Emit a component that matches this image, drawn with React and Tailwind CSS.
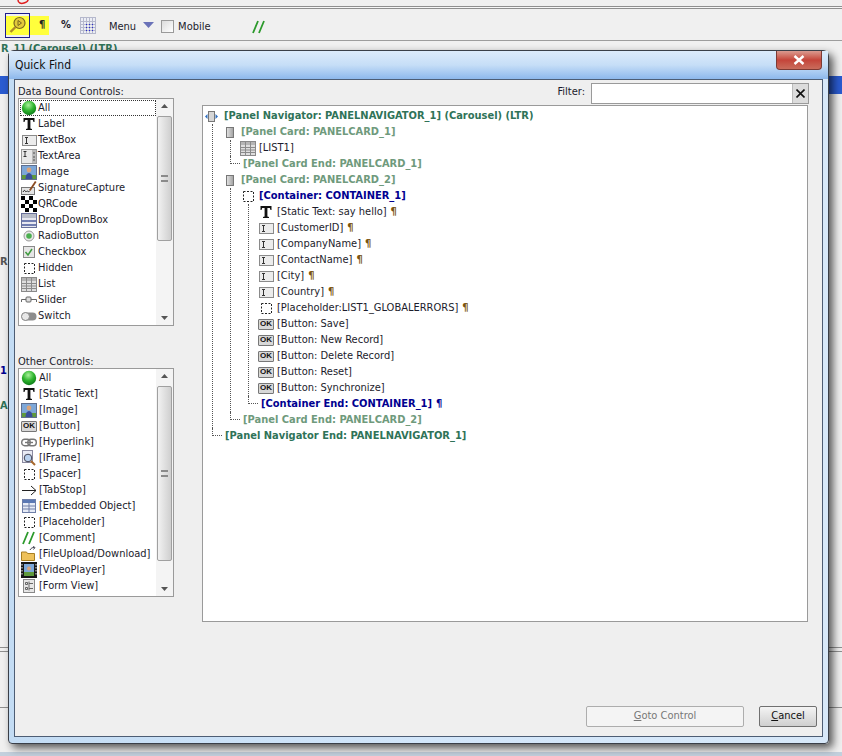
import React from "react"

const Ball = () => (
  <svg width="16" height="16" viewBox="0 0 16 16">
    <defs>
      <radialGradient id="ballFill" cx="45%" cy="30%" r="70%">
        <stop offset="0%" stopColor="#a8f09a" />
        <stop offset="55%" stopColor="#2fb52f" />
        <stop offset="100%" stopColor="#0d7a18" />
      </radialGradient>
    </defs>
    <circle cx="8" cy="8" r="7.2" fill="url(#ballFill)" />
  </svg>
)

const BigT = () => (
  <svg width="14" height="14" viewBox="0 0 14 14">
    <path d="M1.500 1h11v4h-1l-.7-2H8.400v8.400l1.600.6v1H4v-1l1.600-.6V3H3.200l-.7 2h-1z" fill="#111" />
  </svg>
)

const TextBox = () => (
  <svg width="15" height="11" viewBox="0 0 15 11">
    <rect x=".5" y=".5" width="14" height="10" fill="#ececec" stroke="#8a8a8a" />
    <path d="M3 2.500h3M3 8.500h3M4.500 2.500v6" stroke="#333" fill="none" />
  </svg>
)

const TextArea = () => (
  <svg width="16" height="15" viewBox="0 0 16 15">
    <rect x=".5" y=".5" width="15" height="14" fill="#e8e8e8" stroke="#9a9a9a" />
    <path d="M2.500 2.500h3M2.500 7.500h3M4 2.500v5" stroke="#333" fill="none" />
    <rect x="11" y="1" width="4" height="13" fill="#bbb" />
    <path d="M12 4h2M12 8h2M12 11h2" stroke="#555" />
  </svg>
)

const Picture = () => (
  <svg width="16" height="15" viewBox="0 0 16 15">
    <rect x=".5" y=".5" width="15" height="14" fill="#7da7d8" stroke="#5f6f8f" />
    <rect x="1" y="10" width="14" height="4" fill="#5f9a3c" />
    <circle cx="8" cy="5" r="2.400" fill="#d9a47a" />
    <path d="M4.500 14c0-4 1.500-6 3.500-6s3.500 2 3.500 6z" fill="#3a4f9a" />
  </svg>
)

const Signature = () => (
  <svg width="16" height="16" viewBox="0 0 16 16">
    <rect x=".5" y="7.500" width="13" height="7" fill="#e4e4e4" stroke="#777" />
    <path d="M2 12c1-2 2-2 2.500-.5s1.500-1.500 2-.5 1 .5 2 .5" stroke="#222" fill="none" />
    <path d="M8 10l6-9 1.500 1-6 9z" fill="#8a4a20" />
  </svg>
)

const Qr = () => (
  <svg width="16" height="16" viewBox="0 0 16 16">
    <rect width="16" height="16" fill="#fff" />
    <path d="M0 0h4v4H0zM8 0h4v4H8zM4 4h4v4H4zM12 4h4v4h-4zM0 8h4v4H0zM8 8h4v4H8zM4 12h4v4H4zM12 12h4v4h-4z" fill="#000" />
  </svg>
)

const DropDown = () => (
  <svg width="16" height="15" viewBox="0 0 16 15">
    <rect x=".5" y=".5" width="15" height="14" fill="#e8e8f0" stroke="#68709a" />
    <rect x="1" y="1" width="14" height="4" fill="#b8bcc8" />
    <path d="M1 8h14M1 12h14" stroke="#4a5a9a" strokeWidth="1.500" />
  </svg>
)

const Radio = () => (
  <svg width="12" height="12" viewBox="0 0 12 12">
    <circle cx="6" cy="6" r="5" fill="#e8e8e8" stroke="#999" />
    <circle cx="6" cy="6" r="2.800" fill="#4caf50" />
  </svg>
)

const Check = () => (
  <svg width="12" height="12" viewBox="0 0 12 12">
    <rect x=".5" y=".5" width="11" height="11" fill="#e6e6e6" stroke="#8a8a8a" />
    <path d="M2.500 6l2.500 3 4-6" stroke="#3f9a3f" strokeWidth="1.500" fill="none" />
  </svg>
)

const Dashed = () => (
  <svg width="11" height="11" viewBox="0 0 11 11">
    <rect x=".5" y=".5" width="10" height="10" fill="none" stroke="#222" strokeDasharray="2 1.500" />
  </svg>
)

const ListIcon = () => (
  <svg width="16" height="15" viewBox="0 0 16 15">
    <rect x=".5" y=".5" width="15" height="14" fill="#dedede" stroke="#8a8a8a" />
    <rect x="1" y="1" width="14" height="3" fill="#b5b5b5" />
    <path d="M5.500 1v13M10.500 1v13M1 6.500h14M1 9h14M1 11.500h14" stroke="#8a8a8a" />
  </svg>
)

const Slider = () => (
  <svg width="16" height="10" viewBox="0 0 16 10">
    <path d="M.5 7V4.500h15V7" stroke="#666" fill="none" />
    <rect x="5" y="2" width="5" height="5" rx="1" fill="#ddd" stroke="#666" />
  </svg>
)

const Switch = () => (
  <svg width="16" height="9" viewBox="0 0 16 9">
    <rect x=".5" y=".5" width="15" height="8" rx="4" fill="#8d8d8d" />
    <circle cx="4.500" cy="4.500" r="4" fill="#e8e8e8" stroke="#888" />
  </svg>
)

const Ok = () => (
  <div className="flex h-[11px] w-[16px] items-center justify-center rounded-[1px] border border-[#777] bg-[#d8d8d8] font-['Liberation_Sans',Arial,sans-serif] text-[8px] leading-none font-bold text-[#111]">
    OK
  </div>
)

const LinkIcon = () => (
  <svg width="16" height="9" viewBox="0 0 16 9">
    <rect x=".7" y="1.200" width="8.500" height="6.500" rx="3" fill="none" stroke="#777" strokeWidth="1.400" />
    <rect x="6.800" y="1.200" width="8.500" height="6.500" rx="3" fill="none" stroke="#777" strokeWidth="1.400" />
    <path d="M4 4.500h8" stroke="#777" strokeWidth="1.400" />
  </svg>
)

const IFrameIcon = () => (
  <svg width="16" height="16" viewBox="0 0 16 16">
    <rect x="1.500" y=".5" width="10" height="12" fill="#e8eaf4" stroke="#8a8aa0" />
    <circle cx="7" cy="8" r="3.800" fill="#b9d1ef" stroke="#445" />
    <path d="M10 11l4 4" stroke="#a8682c" strokeWidth="2" />
  </svg>
)

const ArrowIcon = () => (
  <svg width="16" height="11" viewBox="0 0 16 11">
    <path d="M1 5.500h14M10 1l5 4.500-5 4.500" stroke="#222" fill="none" />
  </svg>
)

const EmbedIcon = () => (
  <svg width="14" height="14" viewBox="0 0 14 14">
    <rect x=".5" y=".5" width="13" height="13" fill="#e6ebf6" stroke="#6f7fa8" />
    <rect x="1" y="1" width="12" height="3" fill="#5a78b4" />
    <path d="M7 4v9M1 7h12M1 10h12" stroke="#6f7fa8" />
  </svg>
)

const Slashes = ({ size = 14 }) => (
  <svg width={size} height={size} viewBox="0 0 14 14">
    <path d="M1 13L6 1M7 13L12 1" stroke="#2c9a2c" strokeWidth="1.800" fill="none" />
  </svg>
)

const FolderIcon = () => (
  <svg width="16" height="16" viewBox="0 0 16 16">
    <path d="M.5 6h5l1 1.500h7v7H.5z" fill="#eec15a" stroke="#a87f22" />
    <path d="M9 4c1-2 2.500-2.500 4-2.500M12 .5l2 1-1.500 2" stroke="#445" fill="none" />
  </svg>
)

const VideoIcon = () => (
  <svg width="16" height="16" viewBox="0 0 16 16">
    <rect width="16" height="16" fill="#161616" />
    <rect x="3" y="2" width="10" height="12" fill="#7da7d8" />
    <rect x="3" y="10" width="10" height="4" fill="#5f9a3c" />
    <circle cx="8" cy="6.500" r="2" fill="#d9a47a" />
    <path d="M1 2v12M15 2v12" stroke="#eee" strokeDasharray="1.500 1.500" />
  </svg>
)

const FormIcon = () => (
  <svg width="12" height="14" viewBox="0 0 12 14">
    <rect x=".5" y=".5" width="11" height="13" fill="#e6e6e6" stroke="#888" />
    <path d="M2.500 3.500h2v2h-2zM2.500 8.500h2v2h-2zM6 4.500h4M6 9.500h4M6 2.500v9" stroke="#666" fill="none" />
  </svg>
)

const CardIcon = () => (
  <div className="h-[11px] w-[8px] border border-[#777] bg-gradient-to-r from-[#e0e0e0] to-[#a5a5a5]" />
)

const NavIcon = () => (
  <svg width="13" height="11" viewBox="0 0 13 11">
    <path d="M2.500 3L0 5.500 2.500 8zM10.500 3L13 5.500 10.500 8z" fill="#2f6fc0" />
    <rect x="3.500" y=".5" width="6" height="10" fill="#d6d6d6" stroke="#777" />
  </svg>
)

const Magnifier = () => (
  <svg width="20" height="20" viewBox="0 0 20 20">
    <circle cx="11.500" cy="8" r="5.500" fill="#e3cb3a" stroke="#7a6820" strokeWidth="1.200" />
    <path d="M10 5.500v5l3.500-2.500z" fill="none" stroke="#7a6820" />
    <path d="M7.500 12L2.500 17" stroke="#b08a2a" strokeWidth="2.400" />
  </svg>
)

const GridIcon = () => (
  <svg width="16" height="17" viewBox="0 0 16 17">
    <rect x=".5" y=".5" width="15" height="16" fill="#eceef5" stroke="#b5b8cc" />
    <path d="M3.500 1v15M6.500 1v15M9.500 1v15M12.500 1v15M1 4.500h14M1 7.500h14M1 10.500h14M1 13.500h14" stroke="#b5b8cc" />
    <path d="M6.500 7v9M9.500 7v9M12.500 7v9" stroke="#2a2ad0" strokeDasharray="1 2" />
  </svg>
)

const dataControls = [
  [Ball, "All"],
  [BigT, "Label"],
  [TextBox, "TextBox"],
  [TextArea, "TextArea"],
  [Picture, "Image"],
  [Signature, "SignatureCapture"],
  [Qr, "QRCode"],
  [DropDown, "DropDownBox"],
  [Radio, "RadioButton"],
  [Check, "Checkbox"],
  [Dashed, "Hidden"],
  [ListIcon, "List"],
  [Slider, "Slider"],
  [Switch, "Switch"],
]

const otherControls = [
  [Ball, "All"],
  [BigT, "[Static Text]"],
  [Picture, "[Image]"],
  [Ok, "[Button]"],
  [LinkIcon, "[Hyperlink]"],
  [IFrameIcon, "[IFrame]"],
  [Dashed, "[Spacer]"],
  [ArrowIcon, "[TabStop]"],
  [EmbedIcon, "[Embedded Object]"],
  [Dashed, "[Placeholder]"],
  [Slashes, "[Comment]"],
  [FolderIcon, "[FileUpload/Download]"],
  [VideoIcon, "[VideoPlayer]"],
  [FormIcon, "[Form View]"],
]

const fields = [
  [BigT, "[Static Text: say hello]", true],
  [TextBox, "[CustomerID]", true],
  [TextBox, "[CompanyName]", true],
  [TextBox, "[ContactName]", true],
  [TextBox, "[City]", true],
  [TextBox, "[Country]", true],
  [Dashed, "[Placeholder:LIST1_GLOBALERRORS]", true],
  [Ok, "[Button: Save]", false],
  [Ok, "[Button: New Record]", false],
  [Ok, "[Button: Delete Record]", false],
  [Ok, "[Button: Reset]", false],
  [Ok, "[Button: Synchronize]", false],
]

function ListBox({ items, thumbClass, focusFirst, textClass }) {
  return (
    <div className="flex h-full border border-[#9a9a9a] bg-white">
      <div className="w-[137px] pt-px pl-px">
        {items.map(([Icon, label], i) => (
          <div
            key={label + i}
            className={`flex h-4 items-center whitespace-nowrap ${
              focusFirst && i === 0 ? "outline outline-1 -outline-offset-1 outline-dotted outline-[#333]" : ""
            }`}
          >
            <span className="flex w-[18px] shrink-0 items-center justify-center">
              <Icon />
            </span>
            <span className={textClass}>{label}</span>
          </div>
        ))}
      </div>
      <div className="flex w-[17px] flex-col items-center bg-[#f4f4f4] py-[5px]">
        <svg width="7" height="4" viewBox="0 0 7 4">
          <path d="M0 4l3.500-4L7 4z" fill="#555" />
        </svg>
        <div className={`mt-[8px] flex w-[15px] items-center justify-center rounded-[2px] border border-[#a0a0a0] bg-gradient-to-r from-[#f2f2f2] to-[#cfcfcf] ${thumbClass}`}>
          <div className="h-[7px] w-[7px] border-y-2 border-[#8a8a8a]" />
        </div>
        <svg className="mt-auto" width="7" height="4" viewBox="0 0 7 4">
          <path d="M0 0l3.500 4L7 0z" fill="#555" />
        </svg>
      </div>
    </div>
  )
}

const Para = ({ color = "text-[#7a5410]" }) => <span className={`ml-[4px] font-bold ${color}`}>¶</span>

// tick that joins a dotted branch to its closing row
const Tick = () => <span className="mb-2 h-2 w-[10px] self-start border-b border-l border-dotted border-[#555]" />

function Tree() {
  return (
    <div className="h-[517px] border border-[#9a9a9a] bg-white pt-[2px] text-[#1c1c2c]">
      <div className="flex h-4 items-center pl-[2px]">
        <NavIcon />
        <span className="ml-[6px] font-bold whitespace-nowrap text-[#2f7358]">
          [Panel Navigator: PANELNAVIGATOR_1] (Carousel) (LTR)
        </span>
      </div>

      <div className="ml-[9px] border-l border-dotted border-[#555]">
        <div className="flex h-4 items-center pl-[13px]">
          <CardIcon />
          <span className="ml-[7px] font-bold text-[#6f9a7c]">[Panel Card: PANELCARD_1]</span>
        </div>
        <div className="ml-[17px] border-l border-dotted border-[#555]">
          <div className="flex h-4 items-center pl-[9px]">
            <ListIcon />
            <span className="ml-[3px]">[LIST1]</span>
          </div>
        </div>
        <div className="ml-[17px] flex h-4 items-center">
          <Tick />
          <span className="ml-[3px] font-bold text-[#6f9a7c]">[Panel Card End: PANELCARD_1]</span>
        </div>

        <div className="flex h-4 items-center pl-[13px]">
          <CardIcon />
          <span className="ml-[7px] font-bold text-[#6f9a7c]">[Panel Card: PANELCARD_2]</span>
        </div>
        <div className="ml-[17px] border-l border-dotted border-[#555]">
          <div className="flex h-4 items-center pl-[12px]">
            <Dashed />
            <span className="ml-[5px] font-bold text-[#000090]">[Container: CONTAINER_1]</span>
          </div>
          <div className="ml-[17px] border-l border-dotted border-[#555]">
            {fields.map(([Icon, label, para]) => (
              <div key={label} className="flex h-4 items-center pl-[9px]">
                <span className="flex w-4 shrink-0 justify-center">
                  <Icon />
                </span>
                <span className="ml-[3px] whitespace-nowrap">{label}</span>
                {para && <Para />}
              </div>
            ))}
          </div>
          <div className="ml-[17px] flex h-4 items-center">
            <Tick />
            <span className="ml-[3px] font-bold text-[#000090]">[Container End: CONTAINER_1]</span>
            <Para color="text-[#000090]" />
          </div>
        </div>
        <div className="ml-[17px] flex h-4 items-center">
          <Tick />
          <span className="ml-[3px] font-bold text-[#6f9a7c]">[Panel Card End: PANELCARD_2]</span>
        </div>
      </div>

      <div className="ml-[9px] flex h-4 items-center">
        <Tick />
        <span className="ml-[3px] font-bold text-[#2f7358]">[Panel Navigator End: PANELNAVIGATOR_1]</span>
      </div>
    </div>
  )
}

function QuickFind() {
  return (
    <div className="absolute top-[50px] left-[8px] flex h-[694px] w-[821px] flex-col rounded-t-[6px] rounded-b-[4px] border border-[#3a3f48] bg-gradient-to-r from-[#c3dcf4] via-[#d2e6fa] to-[#d7e8f9] shadow-[4px_4px_8px_rgba(0,0,0,0.65)]">
      <div className="flex h-[28px] shrink-0 items-start justify-between bg-gradient-to-b from-[#dcebfb] via-[#c6def7] to-[#8db8ec] pl-[6px]">
        <span className="mt-[6px] text-[12px] leading-4 text-[#111]">Quick Find</span>
        <div className="mr-[6px] flex h-[19px] w-[46px] items-center justify-center rounded-b-[4px] border border-t-0 border-[#7d3a34] bg-gradient-to-b from-[#d99a90] via-[#c4443a] to-[#c96c5c]">
          <svg width="12" height="10" viewBox="0 0 12 10">
            <path d="M1.500 1l9 8M10.500 1l-9 8" stroke="#fff" strokeWidth="2.400" />
          </svg>
        </div>
      </div>

      <div className="mx-[5px] mb-[6px] flex min-h-0 flex-1 flex-col border border-[#4d5d74] bg-[#efefef] text-[#1c1c2c]">
        <div className="flex pt-[3px] pl-[3px]">
          <div className="w-[156px] shrink-0">
            <div className="mt-[2px] h-[13px] leading-[13px] whitespace-nowrap">Data Bound Controls:</div>
            <div className="h-[228px]">
              <ListBox items={dataControls} thumbClass="h-[125px]" focusFirst textClass="" />
            </div>
            <div className="mt-[29px] h-[13px] leading-[14px]">Other Controls:</div>
            <div className="h-[229px]">
              <ListBox items={otherControls} thumbClass="h-[175px]" textClass="ml-px" />
            </div>
          </div>

          <div className="ml-[28px] w-[606px] shrink-0">
            <div className="flex items-center justify-end pb-px">
              <span className="-mt-[2px]">Filter:</span>
              <div className="mr-[-1px] ml-[6px] flex h-[21px] w-[218px] justify-end border border-[#9a9a9a] bg-white">
                <div className="flex w-[16px] items-center justify-center border-l border-[#bbb] bg-[#dcdcdc]">
                  <svg width="9" height="9" viewBox="0 0 9 9">
                    <path d="M.5.5l8 8M8.500.5l-8 8" stroke="#111" strokeWidth="1.600" />
                  </svg>
                </div>
              </div>
            </div>
            <Tree />
          </div>
        </div>

        <div className="mt-auto mr-[5px] mb-[9px] flex justify-end gap-[15px]">
          <button className="h-[21px] w-[158px] rounded-[2px] border border-[#adadad] bg-[#f4f4f4] text-[#777]">
            <u>G</u>oto Control
          </button>
          <button className="h-[21px] w-[58px] rounded-[2px] border border-[#707070] bg-gradient-to-b from-[#f4f4f4] to-[#cfcfcf] text-[#111]">
            <u>C</u>ancel
          </button>
        </div>
      </div>
    </div>
  )
}

export default function App() {
  return (
    <div className="relative h-[756px] w-[842px] overflow-hidden bg-[#f0f0f0] font-['DejaVu_Sans_Condensed','DejaVu_Sans',sans-serif] text-[11px]">
      {/* red marker scribble above the search button */}
      <svg className="absolute top-0 left-[17px]" width="12" height="5" viewBox="0 0 12 5">
        <path d="M1 0c0 3 3 4 6 3s4-2 4-3" stroke="#e02020" strokeWidth="1.500" fill="none" />
      </svg>

      {/* page behind the dialog */}
      <div className="h-[6px]" />
      <div className="h-[3px] border-y border-[#8f8f8f] bg-[#f7f7f7]" />

      <div className="flex h-[32px] items-center border-b border-[#9d9d9d] pt-px text-[#1c1c2c]">
        <div className="ml-[5px] flex h-[19px] w-[44px] items-center bg-[#ffff3c]">
          <div className="-my-1 flex h-[25px] w-[25px] shrink-0 items-center justify-center border border-[#1c1c8c]">
            <Magnifier />
          </div>
          <span className="ml-[9px] font-bold text-[#222]">¶</span>
        </div>
        <span className="ml-[12px] font-bold">%</span>
        <span className="ml-[9px]"><GridIcon /></span>
        <span className="ml-[10px] pt-[4px] pl-[3px]">Menu</span>
        <svg className="ml-[7px]" width="11" height="6" viewBox="0 0 11 6">
          <path d="M0 0h11L5.500 6z" fill="#6a72b8" />
        </svg>
        <div className="mt-[2px] ml-[7px] h-[13px] w-[13px] border border-[#9a9a9a] bg-gradient-to-br from-[#dcdcdc] to-[#ffffff]" />
        <span className="ml-[4px] pt-[5px]">Mobile</span>
        <span className="ml-[41px] pt-[3px]"><Slashes /></span>
      </div>

      <div className="-mt-px h-[12px] pt-[1px] pl-[1px] leading-[16px] font-bold whitespace-nowrap text-[#2f7358]">
        R_1] (Carousel) (LTR)
      </div>
      <div className="mt-[24px] h-[18px] bg-[#2a5bd0]" />
      <div className="mt-[160px] h-[16px] leading-4 font-bold text-[#555]">R</div>
      <div className="mt-[93px] h-[16px] leading-4 font-bold text-[#000090]">1</div>
      <div className="mt-[19px] h-[16px] leading-4 font-bold text-[#2f7358]">A</div>
      <div className="mt-[233px] h-[5px] border-y border-[#8f8f8f]" />
      <div className="mt-[55px] h-[2px] border-t border-[#8f8f8f]" />
      <div className="mt-[43px] h-[8px] bg-[#c3d0dd]" />

      <QuickFind />
    </div>
  )
}
